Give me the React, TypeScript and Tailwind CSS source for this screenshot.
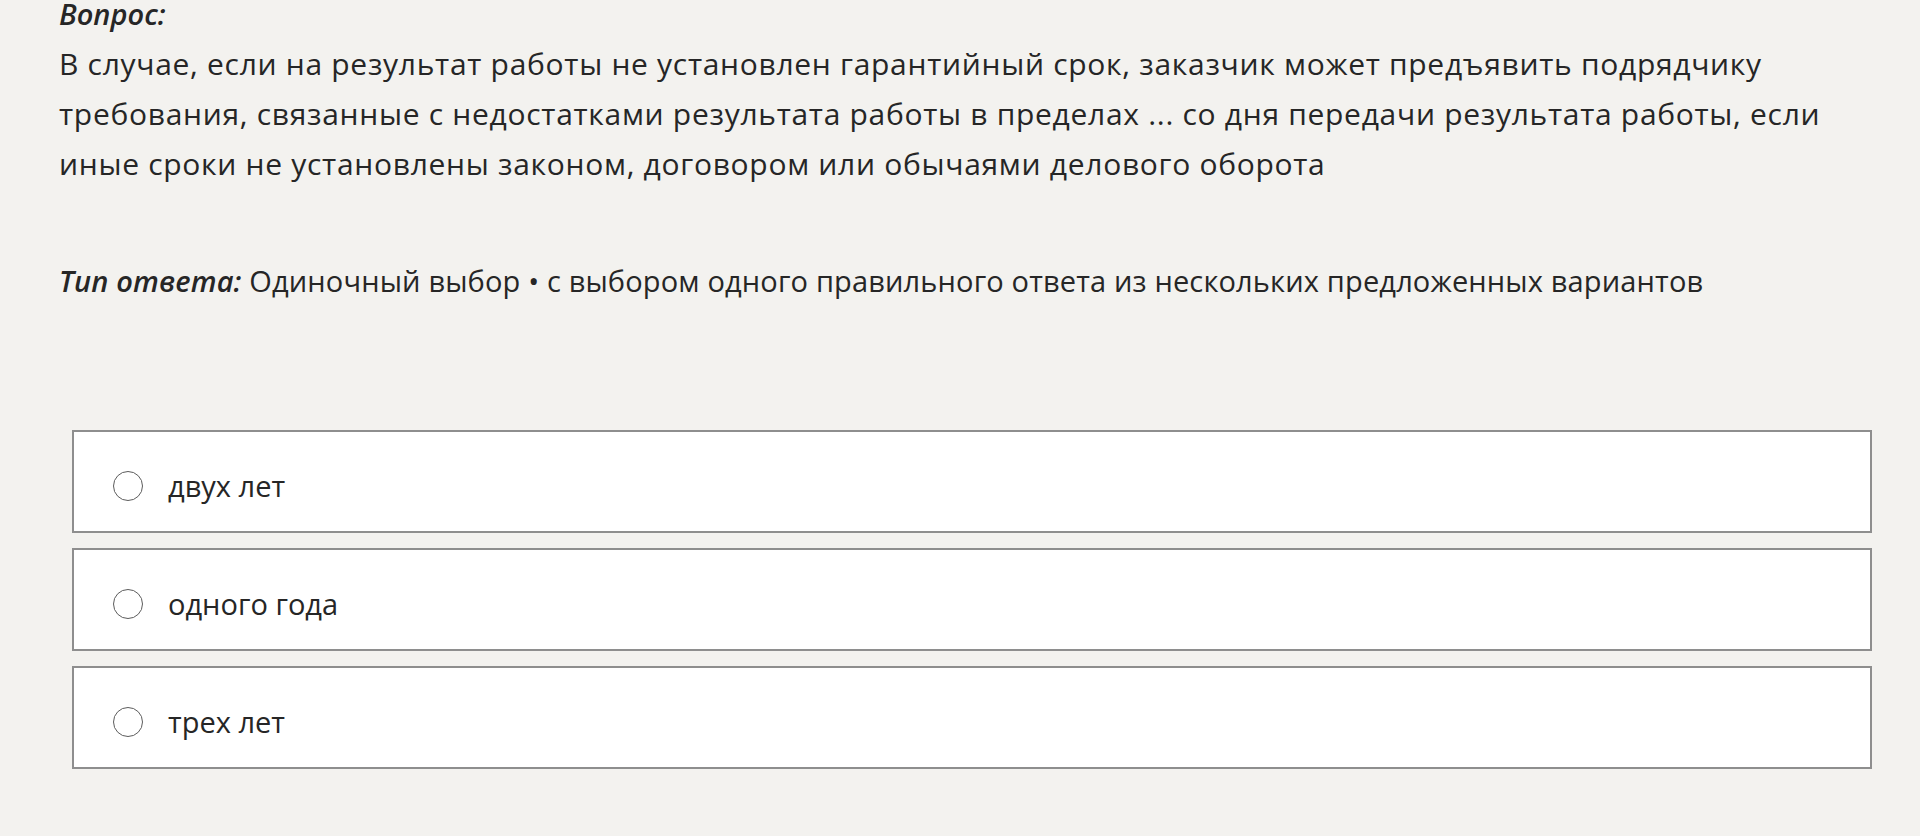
import React from 'react';

const options = ['двух лет', 'одного года', 'трех лет'];

const QUESTION_LINES = [
  'В случае, если на результат работы не установлен гарантийный срок, заказчик может предъявить подрядчику',
  'требования, связанные с недостатками результата работы в пределах ... со дня передачи результата работы, если',
  'иные сроки не установлены законом, договором или обычаями делового оборота',
];

const App: React.FC = () => {
  return (
    <div
      className="min-h-screen w-full bg-[#f3f2ef] text-[#262626]"
      style={{ fontFamily: '"Open Sans", "Noto Sans", sans-serif' }}
    >
      <div className="pl-[59px] pr-[48px]">
        <div className="text-[29px] leading-[28px] font-semibold italic">Вопрос:</div>

        <div className="mt-[11px] text-[30px] leading-[50px] tracking-[0.7px] whitespace-nowrap">
          {QUESTION_LINES.map((line) => (
            <div key={line}>{line}</div>
          ))}
        </div>

        <div className="mt-[67px] text-[29px] leading-[50px] tracking-[0.15px] whitespace-nowrap">
          <span className="font-semibold italic">Тип ответа:</span> Одиночный выбор • с выбором одного правильного ответа из нескольких предложенных вариантов
        </div>

        <div className="mt-[124px] ml-[13px] w-[1800px] flex flex-col gap-[15px]">
          {options.map((opt) => (
            <label
              key={opt}
              className="h-[103px] bg-white border-2 border-[#8e8e8e] flex items-center pl-[39px] pt-[9px] cursor-pointer"
            >
              <span className="w-[30px] h-[30px] rounded-full border-[1.5px] border-[#5c5c5c] bg-white shrink-0" />
              <span className="ml-[25px] text-[29px] leading-[36px]">{opt}</span>
            </label>
          ))}
        </div>
      </div>
    </div>
  );
};

export default App;
